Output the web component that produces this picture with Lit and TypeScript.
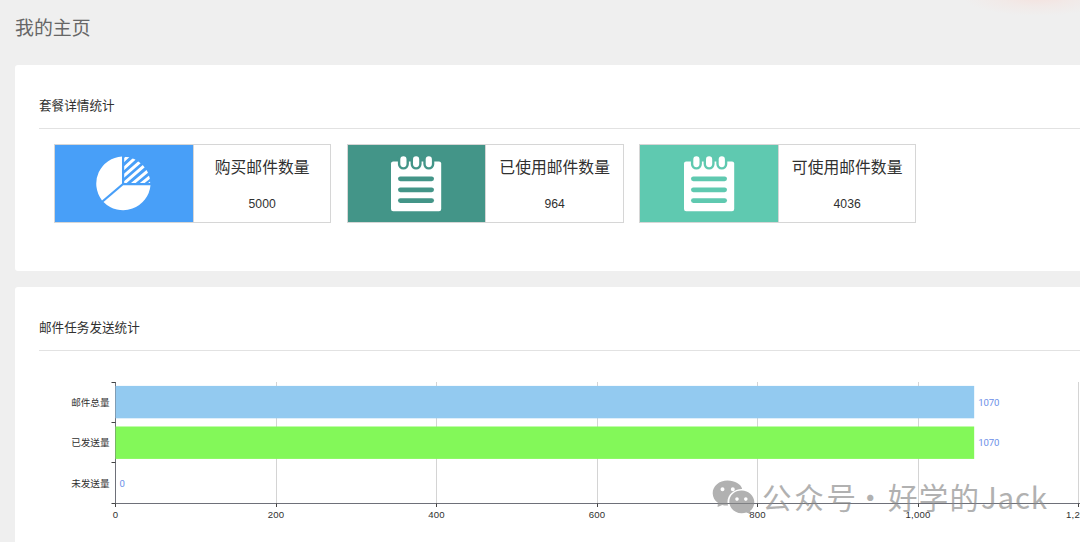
import { LitElement, html, svg, css } from 'lit';
import { customElement } from 'lit/decorators.js';

const SANS = css`"Liberation Sans", "Noto Sans CJK SC", sans-serif`;

const pieIcon = html`<svg class="icon" width="58" height="56" viewBox="0 0 58 56">
  <defs><clipPath id="slice"><path d="M29.2 0.8A26.6 26.6 0 0 1 55.2 27H29.2Z"/></clipPath></defs>
  <path fill="#fff" d="M27 0.4V27.4L7 44.4A27.3 27.3 0 0 1 27 0.4Z"/>
  <path fill="#fff" d="M28.2 29.2H55.5A27.5 27.5 0 0 1 8.5 46Z"/>
  <g clip-path="url(#slice)" stroke="#fff" stroke-width="3">
    <path d="M27 6L35 -1.5M27 14L43 -0.5M27 21.5L49 2.3M27 29L54 5.7M34.5 30.2L58 10.5M42 31.2L60 16.8M50.5 31L60 23.4"/>
  </g>
</svg>`;

const noteIcon = (color: string) => html`<svg class="icon" width="52" height="56" viewBox="0 0 52 56">
  <rect x="1" y="5.4" width="50.2" height="49.8" rx="2.2" fill="#fff"/>
  ${[13.4, 26.1, 38.8].map(x => svg`
    <rect x=${x - 5.5} y="-3" width="11" height="16.6" rx="5.5" fill=${color}/>
    <rect x=${x - 3.1} y="0.3" width="6.2" height="10.9" rx="3.1" fill="#fff"/>`)}
  ${[22.8, 33.8, 44.6].map(y => svg`
    <path d="M10.4 ${y}H41.6" stroke=${color} stroke-width="4.8" stroke-linecap="round"/>`)}
</svg>`;

const stats = [
  { label: '购买邮件数量', value: 5000, color: '#489ff8', icon: pieIcon },
  { label: '已使用邮件数量', value: 964, color: '#439588', icon: noteIcon('#439588') },
  { label: '可使用邮件数量', value: 4036, color: '#5fc9b0', icon: noteIcon('#5fc9b0') },
];

@customElement('stat-tiles')
class StatTiles extends LitElement {
  static styles = css`
    :host { display: flex; gap: 15.5px; padding: 15.5px 15.4px 0; }
    .tile { display: flex; box-sizing: border-box; width: 277px; height: 79px; border: 1px solid #d6d6d6; }
    .art { display: flex; flex: 1; align-items: center; justify-content: center; border-right: 1px solid #d6d6d6;
      box-sizing: border-box; padding: 0 1px 0 0; }
    .icon { display: block; overflow: hidden; }
    .info { flex: 1; display: flex; flex-direction: column; align-items: center; font-family: ${SANS}; color: #303030; }
    .label { margin-top: 11px; font-size: 15.8px; line-height: 24px; white-space: nowrap; }
    .value { margin-top: 14.5px; font-size: 12.2px; line-height: 18px; }
  `;
  render() {
    return stats.map(s => html`<div class="tile">
      <div class="art" style="background:${s.color}">${s.icon}</div>
      <div class="info"><div class="label">${s.label}</div><div class="value">${s.value}</div></div>
    </div>`);
  }
}

const rows = [
  { name: '邮件总量', value: 1070, color: '#93caf0' },
  { name: '已发送量', value: 1070, color: '#83f859' },
  { name: '未发送量', value: 0, color: '#fac858' },
];
const ticks = [0, 200, 400, 600, 800, 1000, 1200];
const LEFT = 76.5;
const TOP = 31;
const ROW = 40.6;
const BOTTOM = 152.5;
const scale = (v: number) => LEFT + v * 0.8025;
const tickX = (v: number) => Math.floor(scale(v)) + 0.5;

@customElement('bar-chart')
class BarChart extends LitElement {
  static styles = css`
    :host { display: block; }
    .plot { display: block; overflow: visible; font-family: ${SANS}; }
    .name { font-size: 9.6px; fill: #303030; text-anchor: end; }
    .tick { font-size: 9.6px; fill: #303030; text-anchor: middle; letter-spacing: 0.15px; }
    .value { font-family: Roboto, sans-serif; font-size: 9.6px; fill: #6b8fe8; }
    .grid { stroke: #d4d4d4; }
    .axis { stroke: #6e7079; fill: none; }
    .mark { stroke: #444; }
  `;
  render() {
    return html`<svg class="plot" width="1041" height="190">
      ${ticks.map(t => svg`<path class="grid" d="M${tickX(t)} ${TOP}V${BOTTOM}"/>`)}
      <path class="axis" d="M${LEFT} ${TOP}V${BOTTOM}H1060"/>
      ${[31.5, 71.5, 111.5, 152.5].map(y => svg`<path class="mark" d="M72.5 ${y}H${LEFT}"/>`)}
      ${ticks.map(t => svg`<path class="mark" d="M${tickX(t)} ${BOTTOM}v3.5"/>
        <text class="tick" x=${scale(t)} y="167">${t.toLocaleString('en-US')}</text>`)}
      ${rows.map((r, i) => svg`
        <rect x=${LEFT} y=${TOP + 3.9 + i * ROW} width=${r.value * 0.8025} height="32.4" fill=${r.color}/>
        <text class="name" x="70.5" y=${TOP + 23.6 + i * ROW}>${r.name}</text>
        <text class="value" x=${scale(r.value) + 4} y=${TOP + 23.6 + i * ROW}
          textLength=${String(r.value).length * 5.3}>${r.value}</text>`)}
    </svg>`;
  }
}

@customElement('app-root')
class AppRoot extends LitElement {
  static styles = css`
    :host { display: block; position: relative; box-sizing: border-box; height: 542px; overflow: hidden;
      padding: 0 0 0 15px; background: #efefef; font-family: ${SANS}; }
    .glow { position: absolute; top: -24px; right: -32px; width: 150px; height: 40px;
      background: radial-gradient(closest-side, #f8d8d2 0%, #f3e6e3 50%, rgba(239,239,239,0) 100%); opacity: .6; }
    .title { height: 65px; box-sizing: border-box; padding-top: 15px; font-size: 18.9px; line-height: 28px; color: #666; }
    .card { box-sizing: border-box; height: 205.5px; padding: 27px 0 0 24px; border-radius: 3px 0 0 3px; background: #fff; }
    .card + .card { height: 280px; margin-top: 16.5px; }
    .heading { box-sizing: border-box; height: 36.5px; padding-top: 4px; font-size: 12.6px; line-height: 20px; color: #303030;
      border-bottom: 1px solid #e2e2e2; }
    .watermark { position: absolute; left: 710px; top: 474px; opacity: .65; }
    .brand { font: 400 29.5px "Noto Sans CJK SC", sans-serif; fill: #888; }
  `;
  render() {
    return html`
      <div class="glow"></div>
      <div class="title">我的主页</div>
      <section class="card"><div class="heading">套餐详情统计</div><stat-tiles></stat-tiles></section>
      <section class="card"><div class="heading">邮件任务发送统计</div><bar-chart></bar-chart></section>
      <svg class="watermark" width="350" height="48">
        <path fill="#888" fill-rule="evenodd" d="M17.5 6.5C9.3 6.5 2.7 12 2.7 19.2c0 4 2 7.3 5.2 9.6l-.3 4.3 4.6-2.2c2 .6 3.6.6 5.8.5-2.6-9 5-16.5 14.2-16.3C31 10 25 6.5 17.5 6.5ZM12.5 13.2a2 2 0 1 1 0 4 2 2 0 0 1 0-4ZM22.8 13.2a2 2 0 1 1 0 4 2 2 0 0 1 0-4ZM31.7 16.4c-7 0-12.4 4.8-12.4 11.2s5.5 11.7 12.4 11.7c1.7 0 3.2-.3 4.6-.8l4.5 1.8-.6-3.5c2.8-2 4.1-5.3 4.1-8.7 0-6.5-5.7-11.7-12.6-11.7ZM27 23.3a1.8 1.8 0 1 1 0 3.6 1.8 1.8 0 0 1 0-3.6ZM35.8 23.3a1.8 1.8 0 1 1 0 3.6 1.8 1.8 0 0 1 0-3.6Z"/>
        <text class="brand" x="52" y="35" textLength="94">公众号</text>
        <text class="brand" x="145.5" y="35">·</text>
        <text class="brand" x="178" y="35" textLength="91">好学的</text>
        <text class="brand" x="271" y="35" textLength="66">Jack</text>
      </svg>`;
  }
}
